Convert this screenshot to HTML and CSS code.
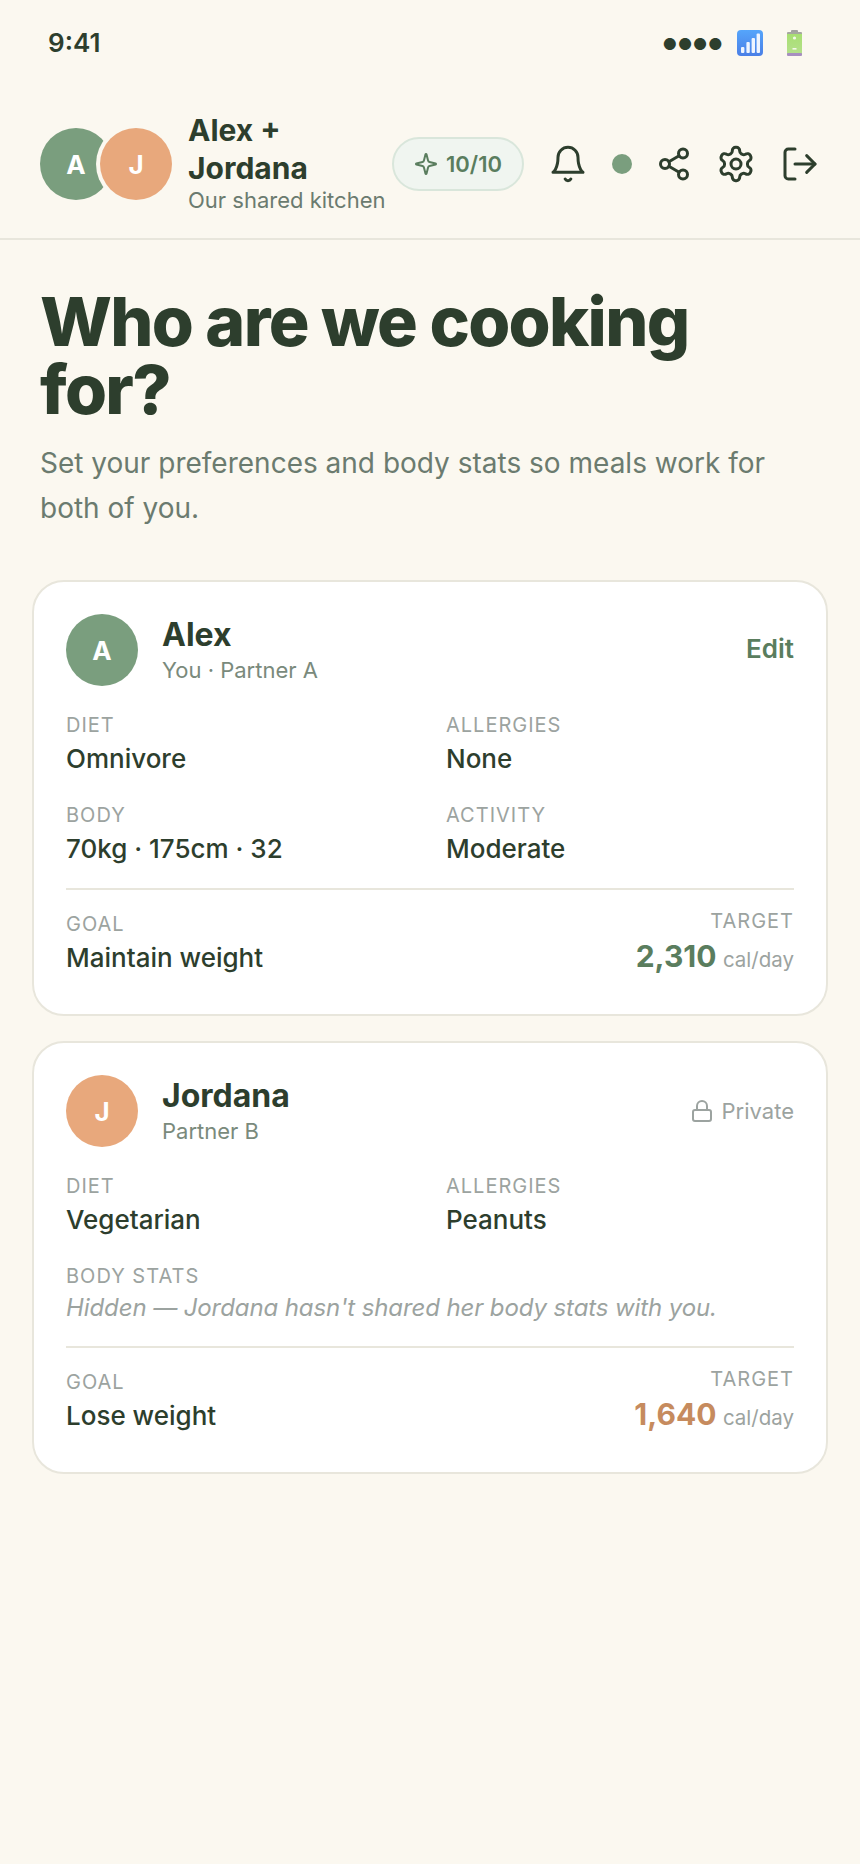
FILE: index.html
```html
<!DOCTYPE html>
<html lang="en">
<head>
    <meta charset="UTF-8">
    <meta name="viewport" content="width=device-width, initial-scale=1.0">
    <title>Who are we cooking for?</title>
    <link rel="stylesheet" href="styles.css">
</head>
<body>
    <div class="status-bar">
        <span class="status-time">9:41</span>
        <span class="status-icons">
            <span class="status-dots">●●●●</span>
            <svg class="status-signal" viewBox="0 0 26 26">
                <defs>
                    <linearGradient id="signalBg" x1="0" y1="0" x2="0" y2="1">
                        <stop offset="0" stop-color="#55a5fb"/>
                        <stop offset="1" stop-color="#4a7fe6"/>
                    </linearGradient>
                </defs>
                <rect width="26" height="26" rx="4" fill="url(#signalBg)"/>
                <rect x="4" y="17" width="3.4" height="6" rx="1" fill="#eef5ff"/>
                <rect x="9.4" y="12" width="3.4" height="11" rx="1" fill="#eef5ff"/>
                <rect x="14.6" y="8" width="3.4" height="15" rx="1" fill="#eef5ff"/>
                <rect x="19.6" y="3.5" width="3.4" height="19.5" rx="1" fill="#eef5ff"/>
            </svg>
            <svg class="status-battery" viewBox="0 0 15 26">
                <defs>
                    <linearGradient id="batteryBg" x1="0" y1="0" x2="0" y2="1">
                        <stop offset="0" stop-color="#a8df72"/>
                        <stop offset="1" stop-color="#b5e08c"/>
                    </linearGradient>
                </defs>
                <rect x="4" y="0" width="7" height="3" rx="1" fill="#a3a3a0"/>
                <rect x="0" y="2" width="15" height="3" rx="1" fill="#a6a8a0"/>
                <rect x="0" y="4" width="15" height="20" fill="url(#batteryBg)"/>
                <rect x="0" y="23" width="15" height="3" rx="1" fill="#a78fc0"/>
                <circle cx="7.5" cy="8" r="1.6" fill="#f4f8ea"/>
                <rect x="5.5" y="18" width="4" height="1.6" fill="#f4f8ea"/>
            </svg>
        </span>
    </div>

    <header class="top-bar">
        <div class="couple">
            <div class="avatar-pair">
                <div class="avatar avatar-a">A</div>
                <div class="avatar avatar-j avatar-overlap">J</div>
            </div>
            <div class="couple-text">
                <div class="couple-name">Alex + Jordana</div>
                <div class="couple-sub">Our shared kitchen</div>
            </div>
        </div>
        <div class="score-pill">
            <svg class="icon-star" viewBox="0 0 24 24"><path d="M9.937 15.5A2 2 0 0 0 8.5 14.063l-6.135-1.582a.5.5 0 0 1 0-.962L8.5 9.936A2 2 0 0 0 9.937 8.5l1.582-6.135a.5.5 0 0 1 .963 0L14.063 8.5A2 2 0 0 0 15.5 9.937l6.135 1.581a.5.5 0 0 1 0 .964L15.5 14.063a2 2 0 0 0-1.437 1.437l-1.582 6.135a.5.5 0 0 1-.963 0z"/></svg>
            <span>10/10</span>
        </div>
        <svg class="icon" viewBox="0 0 24 24"><path d="M6 8a6 6 0 0 1 12 0c0 7 3 9 3 9H3s3-2 3-9"/><path d="M10.3 21a1.94 1.94 0 0 0 3.4 0"/></svg>
        <div class="online-dot"></div>
        <svg class="icon icon-small" viewBox="0 0 24 24"><circle cx="18" cy="5" r="3"/><circle cx="6" cy="12" r="3"/><circle cx="18" cy="19" r="3"/><line x1="8.59" y1="13.51" x2="15.42" y2="17.49"/><line x1="15.41" y1="6.51" x2="8.59" y2="10.49"/></svg>
        <svg class="icon" viewBox="0 0 24 24"><path d="M12.22 2h-.44a2 2 0 0 0-2 2v.18a2 2 0 0 1-1 1.73l-.43.25a2 2 0 0 1-2 0l-.15-.08a2 2 0 0 0-2.73.73l-.22.38a2 2 0 0 0 .73 2.73l.15.1a2 2 0 0 1 1 1.72v.51a2 2 0 0 1-1 1.74l-.15.09a2 2 0 0 0-.73 2.73l.22.38a2 2 0 0 0 2.73.73l.15-.08a2 2 0 0 1 2 0l.43.25a2 2 0 0 1 1 1.73V20a2 2 0 0 0 2 2h.44a2 2 0 0 0 2-2v-.18a2 2 0 0 1 1-1.73l.43-.25a2 2 0 0 1 2 0l.15.08a2 2 0 0 0 2.73-.73l.22-.39a2 2 0 0 0-.73-2.73l-.15-.08a2 2 0 0 1-1-1.74v-.5a2 2 0 0 1 1-1.74l.15-.09a2 2 0 0 0 .73-2.73l-.22-.38a2 2 0 0 0-2.73-.73l-.15.08a2 2 0 0 1-2 0l-.43-.25a2 2 0 0 1-1-1.73V4a2 2 0 0 0-2-2z"/><circle cx="12" cy="12" r="3"/></svg>
        <svg class="icon" viewBox="0 0 24 24"><path d="M9 21H5a2 2 0 0 1-2-2V5a2 2 0 0 1 2-2h4"/><polyline points="16 17 21 12 16 7"/><line x1="21" y1="12" x2="9" y2="12"/></svg>
    </header>

    <main>
        <section class="intro">
            <h1>Who are we cooking for?</h1>
            <p>Set your preferences and body stats so meals work for both of you.</p>
        </section>

        <section class="card">
            <div class="card-head">
                <div class="avatar avatar-a">A</div>
                <div class="card-who">
                    <div class="card-name">Alex</div>
                    <div class="card-role">You · Partner A</div>
                </div>
                <div class="card-edit">Edit</div>
            </div>
            <div class="facts">
                <div><div class="label">Diet</div><div class="value">Omnivore</div></div>
                <div><div class="label">Allergies</div><div class="value">None</div></div>
                <div><div class="label">Body</div><div class="value">70kg · 175cm · 32</div></div>
                <div><div class="label">Activity</div><div class="value">Moderate</div></div>
            </div>
            <div class="card-foot">
                <div class="goal"><div class="label">Goal</div><div class="value">Maintain weight</div></div>
                <div class="target">
                    <div class="label">Target</div>
                    <div class="target-line"><span class="target-num green">2,310</span> <span class="target-unit">cal/day</span></div>
                </div>
            </div>
        </section>

        <section class="card">
            <div class="card-head">
                <div class="avatar avatar-j">J</div>
                <div class="card-who">
                    <div class="card-name">Jordana</div>
                    <div class="card-role">Partner B</div>
                </div>
                <div class="card-private">
                    <svg class="icon-lock" viewBox="0 0 24 24"><rect x="3" y="11" width="18" height="11" rx="2" ry="2"/><path d="M7 11V7a5 5 0 0 1 10 0v4"/></svg>
                    <span>Private</span>
                </div>
            </div>
            <div class="facts">
                <div><div class="label">Diet</div><div class="value">Vegetarian</div></div>
                <div><div class="label">Allergies</div><div class="value">Peanuts</div></div>
                <div class="wide"><div class="label">Body stats</div><div class="hidden-note">Hidden — Jordana hasn't shared her body stats with you.</div></div>
            </div>
            <div class="card-foot">
                <div class="goal"><div class="label">Goal</div><div class="value">Lose weight</div></div>
                <div class="target">
                    <div class="label">Target</div>
                    <div class="target-line"><span class="target-num orange">1,640</span> <span class="target-unit">cal/day</span></div>
                </div>
            </div>
        </section>
    </main>
</body>
</html>
```

FILE: styles.css
```css
* {
    box-sizing: border-box;
}
body {
    margin: 0;
    min-height: 100vh;
    background-color: #fbf8f0;
    color: #2d3e2d;
    font-family: Inter, "Noto Sans", sans-serif;
}

/* status bar */
.status-bar {
    display: flex;
    justify-content: space-between;
    align-items: center;
    height: 86px;
    padding: 0 58px 0 48px;
}
.status-time {
    margin-bottom: 2px;
    font-size: 26px;
    font-weight: 600;
}
.status-icons {
    display: flex;
    align-items: center;
    gap: 14px;
}
.status-dots {
    margin-top: 2px;
    font-size: 16px;
    letter-spacing: 0.5px;
}
.status-signal {
    width: 26px;
    height: 26px;
}
.status-battery {
    width: 15px;
    height: 26px;
    margin-left: 10px;
}

/* top bar */
.top-bar {
    display: flex;
    align-items: center;
    gap: 24px;
    padding: 25px 40px 21px;
    border-bottom: 2px solid #e8e6dc;
}
.couple {
    display: flex;
    align-items: center;
    gap: 16px;
    margin-right: -16px;
}
.avatar-pair {
    display: flex;
}
.avatar {
    display: flex;
    align-items: center;
    justify-content: center;
    flex-shrink: 0;
    width: 72px;
    height: 72px;
    border-radius: 50%;
    color: #fff;
    font-size: 26px;
    font-weight: 700;
}
.avatar-a {
    background-color: #7a9e7e;
}
.avatar-j {
    background-color: #e8a87c;
}
.avatar-overlap {
    margin-left: -12px;
    box-shadow: 0 0 0 4px #fbf8f0;
}
.couple-text {
    width: 196px;
    padding-bottom: 4px;
}
.couple-name {
    font-size: 30px;
    font-weight: 700;
    line-height: 38px;
}
.couple-sub {
    font-size: 22px;
    line-height: 26px;
    color: #6b7b6f;
    white-space: nowrap;
}
.score-pill {
    display: flex;
    align-items: center;
    gap: 8px;
    flex-shrink: 0;
    height: 54px;
    padding: 0 20px;
    border: 2px solid #d9e6db;
    border-radius: 27px;
    background-color: #f0f5f0;
    color: #5a7d5e;
    font-size: 22px;
    font-weight: 600;
}
.icon-star {
    width: 24px;
    height: 24px;
    fill: none;
    stroke: #5a7d5e;
    stroke-width: 2;
}
.icon {
    flex-shrink: 0;
    width: 40px;
    height: 40px;
    fill: none;
    stroke: #2d3e2d;
    stroke-width: 1.8;
    stroke-linecap: round;
    stroke-linejoin: round;
}
.icon-small {
    width: 36px;
    height: 36px;
    stroke-width: 2;
}
.online-dot {
    flex-shrink: 0;
    width: 20px;
    height: 20px;
    border-radius: 50%;
    background-color: #7a9e7e;
}

/* intro */
.intro {
    padding: 47px 40px 49px;
}
h1 {
    margin: 0 0 18px;
    font-size: 68px;
    font-weight: 800;
    line-height: 68px;
    letter-spacing: -1.7px;
}
.intro p {
    margin: 0;
    font-size: 28px;
    line-height: 45px;
    color: #6b7b6f;
}

/* partner cards */
.card {
    margin: 0 32px 25px;
    padding: 32px 32px 35px;
    border: 2px solid #e8e6dc;
    border-radius: 32px;
    background-color: #fff;
}
.card-head {
    display: flex;
    align-items: center;
    gap: 24px;
}
.card-who {
    flex: 1;
}
.card-name {
    font-size: 32px;
    font-weight: 700;
    line-height: 40px;
}
.card-role {
    font-size: 22px;
    line-height: 30px;
    color: #7a8a7c;
}
.card-edit {
    margin-bottom: 3px;
    font-size: 26px;
    font-weight: 600;
    color: #5a7d5e;
}
.card-private {
    display: flex;
    align-items: center;
    gap: 8px;
    font-size: 22px;
    color: #9ca3a0;
}
.icon-lock {
    width: 24px;
    height: 24px;
    fill: none;
    stroke: #9ca3a0;
    stroke-width: 2;
    stroke-linecap: round;
    stroke-linejoin: round;
}
.facts {
    display: grid;
    grid-template-columns: 1fr 1fr;
    gap: 25px 32px;
    margin-top: 26px;
}
.wide {
    grid-column: 1 / -1;
}
.label {
    font-size: 20px;
    line-height: 26px;
    letter-spacing: 1px;
    text-transform: uppercase;
    color: #9ca3a0;
}
.value {
    margin-top: 3px;
    font-size: 26px;
    font-weight: 450;
    line-height: 36px;
}
.hidden-note {
    margin-top: 2px;
    font-size: 24px;
    font-style: italic;
    line-height: 34px;
    letter-spacing: -0.1px;
    color: #9ca3a0;
}
.card-foot {
    display: flex;
    justify-content: space-between;
    align-items: flex-start;
    margin-top: 21px;
    padding-top: 18px;
    border-top: 2px solid #e8e6dc;
}
.goal {
    margin-top: 3px;
}
.target {
    text-align: right;
}
.target-line {
    margin-top: 4px;
    line-height: 36px;
}
.target-num {
    font-size: 30px;
    font-weight: 700;
}
.target-unit {
    margin-left: 2px;
    font-size: 20.5px;
    color: #9ca3a0;
}
.green {
    color: #5a7d5e;
}
.orange {
    color: #c68b5e;
}
```
